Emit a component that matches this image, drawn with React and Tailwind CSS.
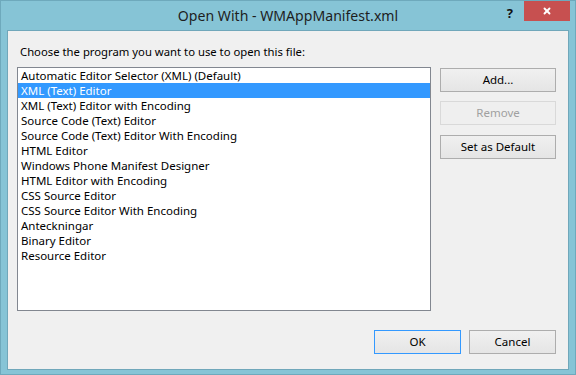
import { X } from "lucide-react";

const programs = [
  "Automatic Editor Selector (XML) (Default)",
  "XML (Text) Editor",
  "XML (Text) Editor with Encoding",
  "Source Code (Text) Editor",
  "Source Code (Text) Editor With Encoding",
  "HTML Editor",
  "Windows Phone Manifest Designer",
  "HTML Editor with Encoding",
  "CSS Source Editor",
  "CSS Source Editor With Encoding",
  "Anteckningar",
  "Binary Editor",
  "Resource Editor",
];

const font = { fontFamily: '"Noto Sans", "Liberation Sans", sans-serif' };

function Button({ children, disabled, isDefault, className = "" }) {
  let look = "border-[#adadad] bg-gradient-to-b from-[#f0f0f0] to-[#e5e5e5] text-black";
  if (disabled) look = "border-[#d9d9d9] bg-[#efefef] text-[#a0a0a0]";
  if (isDefault) look = "border-[#3399ff] bg-gradient-to-b from-[#f0f0f0] to-[#e5e5e5] text-black";
  return (
    <button
      disabled={disabled}
      className={`h-[24px] border text-[11.5px] leading-none flex items-center justify-center ${look} ${className}`}
    >
      {children}
    </button>
  );
}

export default function App() {
  const selected = 1;

  return (
    <div
      className="w-[576px] h-[375px] bg-[#86c4d6] border border-[#6ea9bc] flex flex-col select-none"
      style={font}
    >
      {/* title bar */}
      <div className="h-[29px] grid grid-cols-[1fr_auto_1fr]">
        <div />
        <div className="text-[14.1px] text-[#1e1e1e] leading-[29px] pb-[1px]">
          Open With - WMAppManifest.xml
        </div>
        <div className="flex justify-end items-start">
          <span className="mt-[4px] mr-[11px] text-[13px] font-bold text-[#111] leading-[16px]">?</span>
          <div className="w-[46px] h-[20px] mr-[5px] bg-[#c75050] flex items-center justify-center">
            <X className="w-[10px] h-[10px] text-white" strokeWidth={4.5} />
          </div>
        </div>
      </div>

      {/* dialog body */}
      <div className="mx-[6px] h-[340px] bg-[#f0f0f0] border border-[#70a7ba] flex flex-col">
        <div className="pt-[13px] pl-[12px] h-[28px] text-[11.3px] leading-[15px] text-black">
          Choose the program you want to use to open this file:
        </div>

        <div className="mt-[8px] pl-[9px] pr-[12px] flex gap-[9px]">
          <div className="w-[414px] h-[244px] bg-white border border-[#828790]">
            {programs.map((p, i) => (
              <div
                key={p}
                className={`h-[15px] leading-[15px] pl-[3px] text-[11.5px] whitespace-nowrap ${
                  i === selected ? "bg-[#3399ff] text-white" : "text-black"
                }`}
              >
                {p}
              </div>
            ))}
          </div>

          <div className="flex flex-col gap-[9px] pt-[1px]">
            <Button className="w-[116px]">Add...</Button>
            <Button className="w-[116px]" disabled>Remove</Button>
            <Button className="w-[116px] mt-[1px]">Set as Default</Button>
          </div>
        </div>

        <div className="mt-[19px] pr-[12px] flex justify-end gap-[8px]">
          <Button className="w-[87px]" isDefault>OK</Button>
          <Button className="w-[87px]">Cancel</Button>
        </div>
      </div>
    </div>
  );
}
